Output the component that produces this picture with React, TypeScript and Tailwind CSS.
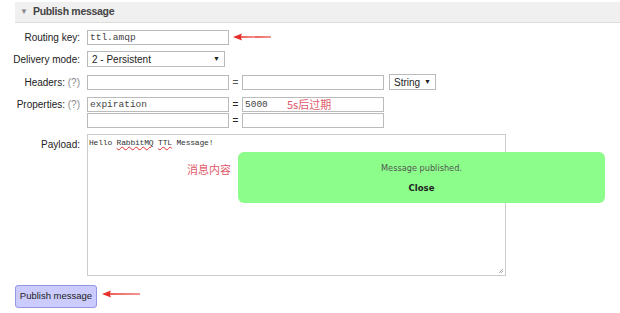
import React from "react";

const Arrow = ({ className }: { className: string }) => (
  <svg className={className} width="40" height="8" viewBox="0 0 40 8">
    <path d="M0 4 L9 0.5 L8 3.2 L38 3.6 L38 4.4 L8 4.8 L9 7.5 Z" fill="#e8302a" />
  </svg>
);

const label = "w-[81px] shrink-0 text-right text-[10px] text-[#222] pr-[1px]";
const input =
  "h-[15px] border border-[#bbb] bg-white text-[9.5px] text-[#444] px-[2px] leading-[13px] font-['Liberation_Mono',monospace]";

export default function App() {
  return (
    <div className="relative w-[620px] h-[313px] bg-white overflow-hidden font-['Liberation_Sans',Arial,sans-serif]">
      <div className="ml-[15px] mt-[2px] h-[21px] bg-[#f0f0f0] border-b border-[#dcdcdc] flex items-center pl-[5px] gap-[5px]">
        <span className="text-[#888] text-[8px] leading-none">▼</span>
        <span className="text-[10.5px] font-bold text-[#444] font-['Liberation_Sans',sans-serif] tracking-[-0.3px]">Publish message</span>
      </div>

      <div className="flex flex-col mt-[7px]">
        <div className="flex items-center h-[15px]">
          <div className={label}>Routing key:</div>
          <div className={`${input} w-[142px] ml-[6px]`}>ttl.amqp</div>
        </div>
        <div className="flex items-center h-[16px] mt-[6px]">
          <div className={label}>Delivery mode:</div>
          <div className="ml-[6px] w-[138px] h-[16px] border border-[#bbb] bg-white flex items-center justify-between px-[4px] text-[10px] text-[#222]">
            <span>2 - Persistent</span>
            <span className="text-[7px]">▼</span>
          </div>
        </div>
        <div className="flex items-center h-[16px] mt-[7px]">
          <div className={label}>
            Headers: <span className="text-[#888]">(?)</span>
          </div>
          <div className={`${input} w-[142px] ml-[6px]`}></div>
          <div className="w-[13px] text-center text-[10px] text-[#555]">=</div>
          <div className={`${input} w-[142px]`}></div>
          <div className="ml-[5px] w-[47px] h-[16px] border border-[#bbb] bg-white flex items-center justify-between px-[4px] text-[10px] text-[#222]">
            <span>String</span>
            <span className="text-[7px]">▼</span>
          </div>
        </div>
        <div className="flex items-center h-[15px] mt-[7px]">
          <div className={label}>
            Properties: <span className="text-[#888]">(?)</span>
          </div>
          <div className={`${input} w-[142px] ml-[6px]`}>expiration</div>
          <div className="w-[13px] text-center text-[10px] text-[#222]">=</div>
          <div className={`${input} w-[142px] text-[#333]`}>5000</div>
        </div>
        <div className="flex items-center h-[15px] mt-[1px]">
          <div className={label}></div>
          <div className={`${input} w-[142px] ml-[6px]`}></div>
          <div className="w-[13px] text-center text-[10px] text-[#222]">=</div>
          <div className={`${input} w-[142px]`}></div>
        </div>
        <div className="flex items-start mt-[6px]">
          <div className={`${label} pt-[3px]`}>Payload:</div>
          <div className="ml-[6px] w-[419px] h-[142px] border border-[#ccc] bg-white px-[1px] pt-[2px] text-[8px] tracking-[-0.2px] text-[#333] font-['Liberation_Mono',monospace] relative">
            <span>Hello </span>
            <span className="underline decoration-wavy decoration-[#e03030]">RabbitMQ</span>
            <span> </span>
            <span className="underline decoration-wavy decoration-[#e03030]">TTL</span>
            <span> Message!</span>
            <svg className="absolute right-[1px] bottom-[1px]" width="6" height="6" viewBox="0 0 6 6">
              <path d="M1 5 L5 1 M3 5 L5 3" stroke="#999" strokeWidth="0.8" />
            </svg>
          </div>
        </div>
        <div className="ml-[15px] mt-[9px] w-[82px] h-[23px] bg-[#cbcbfd] border border-[#9595e0] rounded-[3px] flex items-center justify-center text-[9.5px] text-[#222]">
          Publish message
        </div>
      </div>

      <Arrow className="absolute left-[233px] top-[33px]" />
      <Arrow className="absolute left-[102px] top-[290px]" />
      <div className="absolute left-[287px] top-[96px] text-[11px] text-[#e05a6a] font-['Noto_Sans_CJK_SC',sans-serif]">5s后过期</div>
      <div className="absolute left-[187px] top-[161px] text-[11px] text-[#e05a6a] font-['Noto_Sans_CJK_SC',serif]">消息内容</div>

      <div className="absolute left-[238px] top-[152px] w-[367px] h-[51px] rounded-[6px] bg-[#8cfd8a] flex flex-col items-center pt-[10px] font-['DejaVu_Sans',sans-serif]">
        <div className="text-[8.2px] text-[#555]">Message published.</div>
        <div className="text-[8.5px] font-bold text-[#222] mt-[8px]">Close</div>
      </div>
    </div>
  );
}
